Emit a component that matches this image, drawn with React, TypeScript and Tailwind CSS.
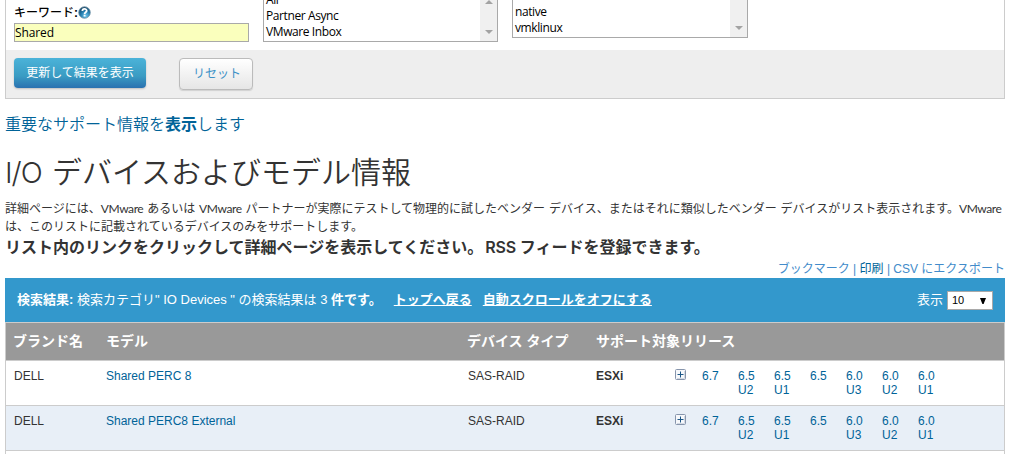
import type { ReactNode } from "react";

const releases = ["6.7", "6.5 U2", "6.5 U1", "6.5", "6.0 U3", "6.0 U2", "6.0 U1"];
const devices = [
  { brand: "DELL", model: "Shared PERC 8", type: "SAS-RAID", row: "bg-white" },
  { brand: "DELL", model: "Shared PERC8 External", type: "SAS-RAID", row: "bg-[#e8eff7]" },
];

function HelpIcon() {
  return (
    <svg width="13" height="13" viewBox="0 0 13 13" className="block">
      <defs>
        <radialGradient id="help" cx="0.6" cy="0.8" r="0.8">
          <stop offset="0" stopColor="#6cc6ee" />
          <stop offset="0.55" stopColor="#2379aa" />
          <stop offset="1" stopColor="#1b4562" />
        </radialGradient>
      </defs>
      <circle cx="6.5" cy="6.5" r="5.8" fill="url(#help)" stroke="#6f8fa3" strokeWidth="0.8" />
      <path d="M4.4 4.9C4.4 2.3 8.7 2.3 8.7 4.7C8.7 6.3 6.6 6.2 6.6 7.9" fill="none" stroke="#fff" strokeWidth="1.8" />
      <rect x="5.6" y="8.7" width="1.9" height="1.8" fill="#fff" />
    </svg>
  );
}

function ExpandIcon() {
  return (
    <svg width="11" height="11" viewBox="0 0 11 11" className="block">
      <rect x="0.5" y="0.5" width="10" height="10" rx="1" fill="#f6f8fb" stroke="#8795ac" />
      <path d="M2 9.5H9.5V2" fill="none" stroke="#d3d9e3" />
      <path d="M2.5 5.5H8.5M5.5 2.5V8.5" stroke="#1b5687" />
    </svg>
  );
}

function Arrow({ up = false }: { up?: boolean }) {
  return (
    <svg width="8" height="4" viewBox="0 0 8 4" className="block">
      <path d={up ? "M0 4L4 0L8 4Z" : "M0 0H8L4 4Z"} fill="#a3a3a3" />
    </svg>
  );
}

function ListBox({ children, className, up }: { children: ReactNode; className: string; up?: boolean }) {
  return (
    <div className={`flex overflow-hidden border border-t-0 border-[#a9a9a9] bg-white ${className}`}>
      <div className="flex flex-1 flex-col justify-end pb-px pl-[2px] font-['Open_Sans','Noto_Sans_CJK_JP',sans-serif] text-[12px] leading-[16px] tracking-[-0.4px] text-black">
        {children}
      </div>
      <div className="flex w-[17px] flex-col items-center justify-between bg-[#f0f0f0] pb-[7px]">
        <span>{up && <Arrow up />}</span>
        <Arrow />
      </div>
    </div>
  );
}

function Brand() {
  return <span className="tracking-[-0.4px]">VMware</span>;
}

export default function App() {
  return (
    <div className="h-[454px] w-[1009px] overflow-hidden bg-white pl-[5px] font-['Liberation_Sans','Noto_Sans_CJK_JP',sans-serif] text-[#333]">
      <div className="w-[1000px]">
        <section className="h-[99px] border border-t-0 border-[#ccc]">
          <div className="flex h-[50px] items-start pl-[8px]">
            <div className="w-[235px]">
              <div className="flex h-[23px] items-start pt-[5px] text-[12px] font-medium leading-[17px] text-black">
                <span className="w-[64px] whitespace-nowrap">キーワード<b>:</b></span>
                <span className="pt-px"><HelpIcon /></span>
              </div>
              <input
                defaultValue="Shared"
                className="block h-[19px] w-[235px] border border-[#a9a9a9] bg-[#faffbd] p-0 font-['Open_Sans',sans-serif] text-[12px] leading-[17px] tracking-[-0.1px] text-black outline-none"
              />
            </div>
            <ListBox className="ml-[14px] h-[42px] w-[235px]" up>
              <div>All</div>
              <div>Partner Async</div>
              <div>VMware Inbox</div>
            </ListBox>
            <ListBox className="ml-[14px] h-[38px] w-[236px]">
              <div>native</div>
              <div>vmklinux</div>
            </ListBox>
          </div>
          <div className="flex h-[48px] items-start bg-[#eee] pl-[8px] pt-[8px]">
            <button className="h-[30px] w-[132px] rounded-[4px] bg-linear-to-b from-[#4bb3d9] via-[#3a9cc3] via-60% to-[#2a71b0] text-[12px] leading-[28px] text-white shadow-[0_1px_2px_rgba(0,0,0,0.2)]">
              更新して結果を表示
            </button>
            <button className="ml-[33px] h-[32px] w-[74px] rounded-[4px] border border-[#bbb] bg-linear-to-b from-white to-[#e6e6e6] pl-[2px] text-[12px] leading-[30px] text-[#3d91c6] shadow-[0_1px_1px_rgba(0,0,0,0.12)]">
              リセット
            </button>
          </div>
        </section>

        <p className="mt-[14px] h-[24px] whitespace-nowrap text-[16px] leading-[24px] text-[#006398]">
          <span className="font-[350]">重要なサポート情報を</span><b>表示</b><span className="font-[350]">します</span>
        </p>
        <h1 className="mt-[12px] flex h-[44px] whitespace-nowrap font-['Noto_Sans_CJK_JP',sans-serif] text-[30px] font-[350] leading-[42px]">
          <span className="w-[47px] pt-[3px] font-['Inter',sans-serif] text-[29px] font-light tracking-[-1px]">I/O</span>
          <span>デバイスおよびモデル情報</span>
        </h1>
        <div className="mt-[7px] font-['Lato','Noto_Sans_CJK_JP',sans-serif] text-[12px] leading-[18px] [word-spacing:0.8px]">
          <p className="whitespace-nowrap">
            詳細ページには、<Brand /> あるいは <Brand /> パートナーが実際にテストして物理的に試したベンダー デバイス、またはそれに類似したベンダー デバイスがリスト表示されます。<Brand />
          </p>
          <p className="whitespace-nowrap">は、このリストに記載されているデバイスのみをサポートします。</p>
        </div>
        <p className="h-[24px] whitespace-nowrap font-['Inter','Noto_Sans_CJK_JP',sans-serif] text-[16px] font-bold leading-[22px]">
          リスト内のリンクをクリックして詳細ページを表示してください。<span className="ml-[2px] font-semibold tracking-[-0.2px]">RSS</span> フィードを登録できます。
        </p>
        <nav className="h-[18px] whitespace-pre text-right text-[12px] leading-[18px] text-[#428bca]">
          <a>ブックマーク</a> | <a className="text-[#006398]">印刷</a> | <a>CSV にエクスポート</a>
        </nav>

        <div className="flex h-[44px] items-center bg-[#3398cc] pl-[12px] pr-[12px] text-[13px] text-white">
          <span className="whitespace-pre"><b>検索結果:</b> 検索カテゴリ" IO Devices " の検索結果は 3 <b>件です。</b></span>
          <b className="ml-[12px] underline">トップへ戻る</b>
          <b className="ml-[11px] underline">自動スクロールをオフにする</b>
          <span className="ml-auto">表示</span>
          <div className="ml-[4px] mt-px flex h-[19px] w-[46px] items-center justify-between border border-[#a9a9a9] bg-white pl-[4px] pr-[6px] text-[11px] text-black">
            10
            <svg width="6" height="6" viewBox="0 0 6 6"><path d="M0 0H6L3.6 6H2.4Z" fill="#000" /></svg>
          </div>
        </div>

        <div className="border-x border-[#ccc]">
          <div className="flex h-[39px] items-center border-y border-[#ccc] bg-[#999] pl-[7px] text-[14px] font-bold text-white">
            <span className="w-[93px]">ブランド名</span>
            <span className="w-[361px]">モデル</span>
            <span className="w-[129px]">デバイス タイプ</span>
            <span>サポート対象リリース</span>
          </div>
          {devices.map((d) => (
            <div key={d.model} className={`flex h-[45px] items-start border-b border-[#ccc] pl-[8px] pt-[8px] text-[12px] leading-[14px] ${d.row}`}>
              <span className="w-[92px]">{d.brand}</span>
              <a className="w-[362px] text-[#006398]">{d.model}</a>
              <span className="w-[128px]">{d.type}</span>
              <b className="w-[79px]">ESXi</b>
              <span className="w-[27px]"><ExpandIcon /></span>
              {releases.map((r) => (
                <a key={r} className="w-[36px] pr-[12px] text-[#006398]">{r}</a>
              ))}
            </div>
          ))}
          <div className="h-[3px]" />
        </div>
      </div>
    </div>
  );
}
